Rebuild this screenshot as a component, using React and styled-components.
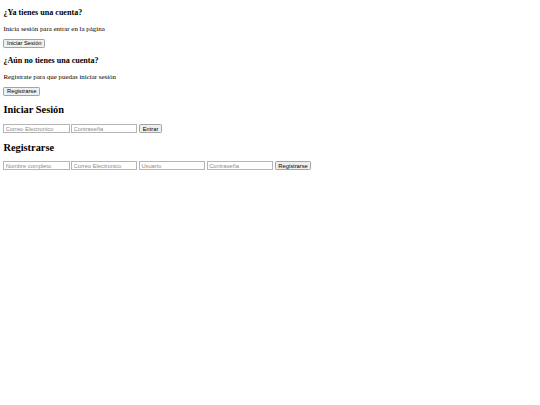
import React from 'react';
import styled, {createGlobalStyle} from 'styled-components';

const Global = createGlobalStyle`
  html, body {
    margin: 0;
    padding: 0;
    background: #fff;
  }
  body {
    font-family: "Liberation Serif", "Times New Roman", serif;
    color: #000;
  }
`;

// the whole page is shown scaled down
const Page = styled.div`
  zoom: 0.432;
  padding: 0 8px 8px;
  font-size: 16px;
`;

const Section = styled.section`
  display: block;
`;

const SmallTitle = styled.h3`
  font-size: 18.72px;
  font-weight: bold;
  margin: 18.72px 0;
`;

const Title = styled.h2`
  font-size: 24px;
  font-weight: bold;
  margin: 19.92px 0;
`;

const Text = styled.p`
  margin: 16px 0;
  line-height: normal;
`;

const Button = styled.button`
  font-family: "Liberation Sans", Arial, sans-serif;
  font-size: 13.33px;
  padding: 1px 6px;
  border: 2px solid #a3a3a3;
  border-radius: 3px;
  background: #efefef;
  color: #000;
`;

const Form = styled.form`
  display: block;
  margin: 0;
`;

const Input = styled.input`
  box-sizing: border-box;
  font-family: "Liberation Sans", Arial, sans-serif;
  font-size: 13.33px;
  padding: 1px 3px;
  height: 21px;
  border: 2px solid #b5b5b5;
  width: 153px;
  &::placeholder {
    color: #8a8a8a;
  }
`;

export default function App() {
  return (
    <>
      <Global />
      <Page>
        <Section>
          <SmallTitle>¿Ya tienes una cuenta?</SmallTitle>
          <Text>Inicia sesión para entrar en la página</Text>
          <Button>Iniciar Sesión</Button>
          <SmallTitle>¿Aún no tienes una cuenta?</SmallTitle>
          <Text>Registrate para que puedas iniciar sesión</Text>
          <Button>Registrarse</Button>
        </Section>
        <Section>
          <Title>Iniciar Sesión</Title>
          <Form onSubmit={e => e.preventDefault()}>
            <Input type="text" placeholder="Correo Electronico" />{' '}
            <Input type="password" placeholder="Contraseña" />{' '}
            <Button type="submit">Entrar</Button>
          </Form>
        </Section>
        <Section>
          <Title>Registrarse</Title>
          <Form onSubmit={e => e.preventDefault()}>
            <Input type="text" placeholder="Nombre completo" />{' '}
            <Input type="text" placeholder="Correo Electronico" />{' '}
            <Input type="text" placeholder="Usuario" />{' '}
            <Input type="password" placeholder="Contraseña" />{' '}
            <Button type="submit">Registrarse</Button>
          </Form>
        </Section>
      </Page>
    </>
  );
}
